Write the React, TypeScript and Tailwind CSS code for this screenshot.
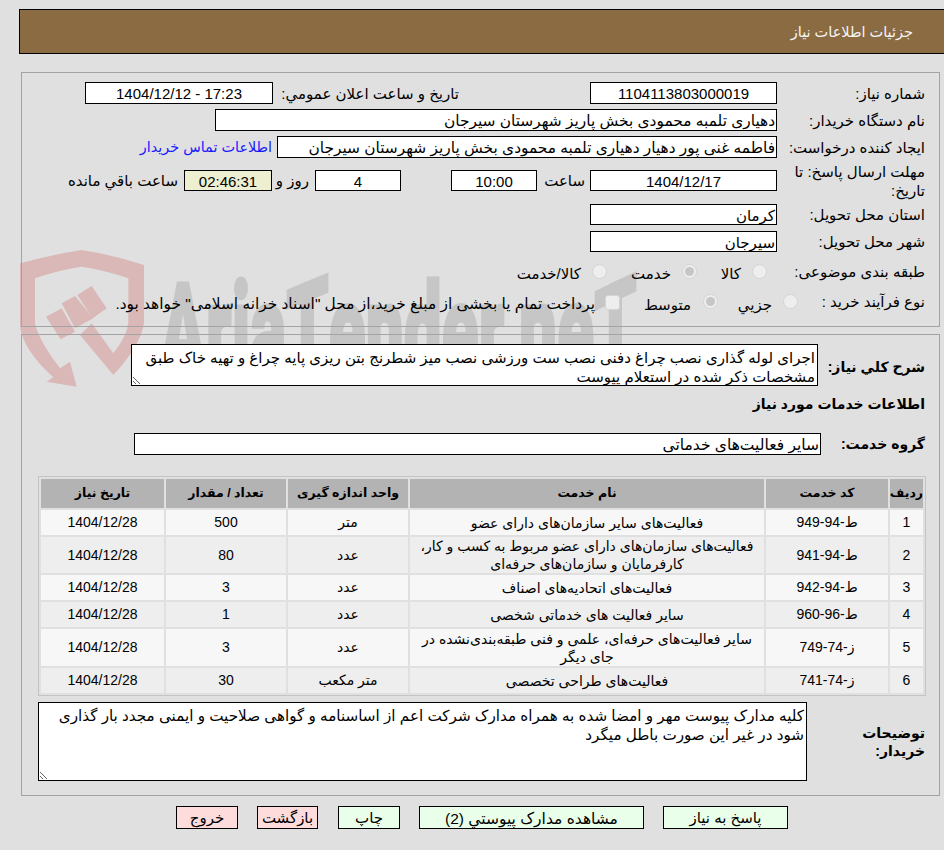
const font = "[font-family:'Liberation_Sans','DejaVu_Sans',sans-serif]";

const services = [
  { id: "1", code: "ط-94-949", name: "فعالیت‌های سایر سازمان‌های دارای عضو", unit: "متر", qty: "500", h: "h-[25px]" },
  { id: "2", code: "ط-94-941", name: "فعالیت‌های سازمان‌های دارای عضو مربوط به کسب و کار،", name2: "کارفرمایان و سازمان‌های حرفه‌ای", unit: "عدد", qty: "80", h: "h-[36px]" },
  { id: "3", code: "ط-94-942", name: "فعالیت‌های اتحادیه‌های اصناف", unit: "عدد", qty: "3", h: "h-[25px]" },
  { id: "4", code: "ط-96-960", name: "سایر فعالیت های خدماتی شخصی", unit: "عدد", qty: "1", h: "h-[25px]" },
  { id: "5", code: "ز-74-749", name: "سایر فعالیت‌های حرفه‌ای، علمی و فنی طبقه‌بندی‌نشده در", name2: "جای دیگر", unit: "عدد", qty: "3", h: "h-[37px]" },
  { id: "6", code: "ز-74-741", name: "فعالیت‌های طراحی تخصصی", unit: "متر مکعب", qty: "30", h: "h-[25px]" },
];

const Field = ({ className, children }: { className: string; children: React.ReactNode }) => (
  <div className={`flex items-center border border-black bg-white pt-px leading-none whitespace-nowrap overflow-hidden ${className}`}>
    {children}
  </div>
);

const Radio = ({ checked }: { checked?: boolean }) => (
  <span className="flex h-[15px] w-[15px] shrink-0 items-center justify-center rounded-full border border-[#d4d4d4] bg-[#eeeeee]">
    {checked && <span className="h-[9px] w-[9px] rounded-full bg-[#c6c6c6]" />}
  </span>
);

const Watermark = () => (
  <div className="pointer-events-none absolute inset-0 overflow-hidden">
    <svg className="absolute left-[20px] top-[240px]" width="300" height="170" viewBox="0 0 900 510" fill="#dbb8b8">
      <path d="M0,70 Q90,45 185,30 Q280,45 372,75 L372,250 Q360,320 280,405 L180,285 L215,250 L280,340 Q320,290 325,250 L325,115 Q255,90 185,80 Q115,90 45,115 L45,250 Q55,300 120,385 L150,365 L170,440 L80,425 L100,412 Q10,330 0,260 Z" />
      <path d="M78,230 L125,205 L165,275 L122,298 Z" />
      <path d="M125,190 L165,168 L220,235 L165,265 Z" />
      <path d="M172,165 L215,138 L260,205 L218,235 Z" />
    </svg>
    <span dir="ltr" className="absolute left-[160px] top-[266px] origin-top-left scale-x-[0.52] text-[130px] leading-none font-black whitespace-nowrap text-[#c6c6c6] [font-family:'Roboto',sans-serif] [-webkit-text-stroke:3px_#c6c6c6]">
      Aria<span className="inline-block -skew-y-[12deg]">T</span>ender.ne<span className="inline-block -skew-y-[14deg]">T</span>
    </span>
  </div>
);

export default function App() {
  return (
    <div dir="rtl" className={`relative h-[850px] w-[944px] overflow-hidden bg-[#e0e0e0] text-[15px] text-black ${font}`}>
      <Watermark />
      <div className="relative">
        {/* header */}
        <div className="pt-[9px] pl-[19px]">
          <div className="flex h-[45px] items-center border border-r-0 border-black bg-[#8b6b42] pt-[3px] pr-[31px] text-[14.5px] text-[#f4f4f4]">
            جزئیات اطلاعات نیاز
          </div>
        </div>

        {/* first panel */}
        <div className="mt-[18px] mr-[4px] ml-[21px] h-[255px] border border-[#a3a3a3] pt-[9px] pr-[14px]">
          <div className="flex h-[22px] items-center">
            <div className="mt-[2px] w-[148px]">شماره نیاز:</div>
            <Field className="h-[22px] w-[187px] justify-center">1104113803000019</Field>
            <div className="mt-[2px] mr-[131px] w-[186px] whitespace-nowrap">تاریخ و ساعت اعلان عمومي:</div>
            <Field className="h-[22px] w-[188px] justify-center">
              <span dir="ltr">1404/12/12 - 17:23</span>
            </Field>
          </div>
          <div className="mt-[5px] flex h-[22px] items-center">
            <div className="mt-[2px] w-[148px]">نام دستگاه خریدار:</div>
            <Field className="h-[22px] w-[562px] pr-[1px] text-[15.4px]">دهیاری تلمبه محمودی بخش پاریز شهرستان سیرجان</Field>
          </div>
          <div className="mt-[5px] flex h-[22px] items-center">
            <div className="mt-[2px] w-[148px]">ایجاد کننده درخواست:</div>
            <Field className="h-[22px] w-[500px] pr-[1px] text-[15.4px]">فاطمه غنی پور دهیار دهیاری تلمبه محمودی بخش پاریز شهرستان سیرجان</Field>
            <a className="mt-[2px] mr-[5px] text-[14.4px] text-[#1a1aff]">اطلاعات تماس خریدار</a>
          </div>
          <div className="mt-[4px] flex h-[37px] items-center">
            <div className="w-[148px] leading-[19px]">مهلت ارسال پاسخ: تا تاریخ:</div>
            <Field className="h-[21px] w-[187px] justify-center">1404/12/17</Field>
            <div className="mt-[2px] mr-[5px] w-[48px]">ساعت</div>
            <Field className="h-[21px] w-[86px] justify-center">10:00</Field>
            <div className="w-[50px]" />
            <Field className="h-[21px] w-[86px] justify-center">4</Field>
            <div className="mt-[2px] mr-[6px] w-[37px]">روز و</div>
            <Field className="h-[21px] w-[88px] justify-center !bg-[#eeeed1]">02:46:31</Field>
            <div className="mt-[2px] mr-[6px] whitespace-nowrap">ساعت باقي مانده</div>
          </div>
          <div className="mt-[5px] flex h-[21px] items-center">
            <div className="mt-[2px] w-[148px]">استان محل تحویل:</div>
            <Field className="h-[21px] w-[187px] pr-[1px]">کرمان</Field>
          </div>
          <div className="mt-[6px] flex h-[21px] items-center">
            <div className="mt-[2px] w-[148px]">شهر محل تحویل:</div>
            <Field className="h-[21px] w-[187px] pr-[1px]">سیرجان</Field>
          </div>
          <div className="mt-[9px] flex h-[20px] items-center">
            <div className="mt-[2px] w-[148px] whitespace-nowrap">طبقه بندی موضوعی:</div>
            <div className="mr-[10px]"><Radio /></div>
            <div className="mr-[11px] mt-[7px] w-[44px]">کالا</div>
            <Radio checked />
            <div className="mr-[11px] mt-[7px] w-[64px]">خدمت</div>
            <Radio />
            <div className="mr-[11px] mt-[7px] whitespace-nowrap">کالا/خدمت</div>
          </div>
          <div className="mt-[10px] flex h-[20px] items-center">
            <div className="mt-[2px] w-[127px] whitespace-nowrap">نوع فرآیند خرید :</div>
            <Radio />
            <div className="mr-[11px] mt-[9px] w-[54px]">جزيي</div>
            <Radio checked />
            <div className="mr-[12px] mt-[9px] w-[71px]">متوسط</div>
            <span className="mb-[-2px] h-[15px] w-[15px] shrink-0 rounded-[3px] border border-[#d4d4d4] bg-[#eeeeee]" />
            <div className="mr-[10px] mt-[6px] text-[15.4px] whitespace-nowrap">پرداخت تمام یا بخشی از مبلغ خرید،از محل "اسناد خزانه اسلامی" خواهد بود.</div>
          </div>
        </div>

        {/* second panel */}
        <div className="mt-[7px] mr-[4px] ml-[21px] h-[462px] border border-[#a3a3a3] pt-[9px] pr-[14px]">
          <div className="flex h-[42px] items-center">
            <div className="mt-[4px] w-[107px] text-[14px] font-bold">شرح کلي نياز:</div>
            <textarea
              readOnly
              className={`h-[42px] w-[687px] border border-black bg-white px-[2px] pt-[3px] pb-0 text-[15px] leading-[19px] text-black outline-none ${font}`}
              defaultValue="اجرای لوله گذاری نصب چراغ دفنی نصب ست ورزشی نصب میز شطرنج بتن ریزی پایه چراغ و تهیه خاک طبق مشخصات ذکر شده در استعلام پیوست"
            />
          </div>
          <div className="mt-[8px] h-[20px] text-[14px] leading-[20px] font-bold">اطلاعات خدمات مورد نياز</div>
          <div className="mt-[19px] flex h-[22px] items-center">
            <div className="w-[104px] text-[14px] font-bold">گروه خدمت:</div>
            <Field className="h-[22px] w-[687px] pr-[1px] text-[15.5px]">سایر فعالیت‌های خدماتی</Field>
          </div>

          <table className="mt-[21px] mr-[-1px] w-[888px] table-fixed border-separate border-spacing-[2px] border border-[#c4c4c4] text-center text-[14px]">
            <colgroup>
              <col className="w-[33px]" />
              <col className="w-[122px]" />
              <col className="w-[354px]" />
              <col className="w-[120px]" />
              <col className="w-[120px]" />
              <col className="w-[123px]" />
            </colgroup>
            <thead>
              <tr className="h-[29px] bg-[#b3b3b3] text-[12.5px] font-bold">
                <th className="p-0">ردیف</th>
                <th className="p-0">کد خدمت</th>
                <th className="p-0">نام خدمت</th>
                <th className="p-0">واحد اندازه گیری</th>
                <th className="p-0">تعداد / مقدار</th>
                <th className="p-0">تاریخ نیاز</th>
              </tr>
            </thead>
            <tbody>
              {services.map((s, i) => (
                <tr key={s.id} className={`${s.h} ${i % 2 === 0 ? "bg-[#f7f7f7]" : "bg-[#eeeeee]"}`}>
                  <td className="p-0">{s.id}</td>
                  <td className="p-0">{s.code}</td>
                  <td className="p-0 leading-[18px] whitespace-nowrap">
                    {s.name}
                    {s.name2 && <br />}
                    {s.name2}
                  </td>
                  <td className="p-0">{s.unit}</td>
                  <td className="p-0">{s.qty}</td>
                  <td className="p-0">1404/12/28</td>
                </tr>
              ))}
            </tbody>
          </table>

          <div className="mt-[6px] flex items-center">
            <div className="w-[118px] pl-[40px] text-[14px] leading-[18px] font-bold">توضيحات خريدار:</div>
            <textarea
              readOnly
              className={`h-[79px] w-[769px] border border-black bg-white px-[2px] pt-[3px] pb-0 text-[15.2px] leading-[19px] text-black outline-none ${font}`}
              defaultValue="کلیه مدارک پیوست مهر و امضا شده به همراه مدارک شرکت اعم از اساسنامه و گواهی صلاحیت و ایمنی مجدد بار گذاری شود در غیر این صورت باطل میگرد"
            />
          </div>
        </div>

        {/* buttons */}
        <div className="mt-[10px] flex h-[23px] gap-[19px] pr-[156px]">
          <button className="w-[125px] border border-black bg-[#eaffea]">پاسخ به نیاز</button>
          <button className="w-[225px] border border-black bg-[#eaffea] text-[15.5px]">مشاهده مدارک پیوستي (2)</button>
          <button className="w-[62px] border border-black bg-[#eaffea]">چاپ</button>
          <button className="mr-px w-[61px] border border-black bg-[#ffdcdc]">بازگشت</button>
          <button className="w-[62px] border border-black bg-[#ffdcdc]">خروج</button>
        </div>
      </div>
    </div>
  );
}
